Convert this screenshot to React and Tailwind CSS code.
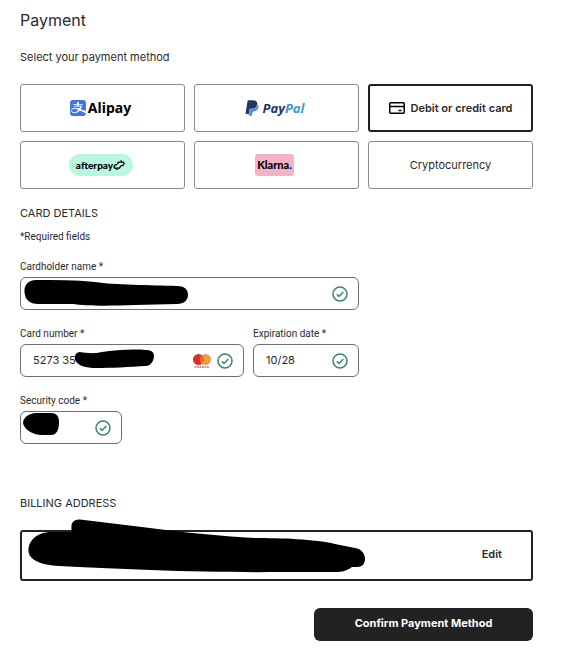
import { useState } from 'react';
import { SiAlipay } from 'react-icons/si';

const AlipayLogo = () => (
    <span className="mr-1 flex items-center gap-0.5 text-black">
        <SiAlipay className="h-4 w-4 text-[#3b76e8]" />
        <span className="font-['Noto_Sans',sans-serif] text-[14px] leading-4 font-bold">Alipay</span>
    </span>
);

const PayPalLogo = () => (
    <span className="mr-1 flex items-center gap-1 font-['Open_Sans',sans-serif] text-[13px] leading-4 font-bold italic">
        <svg viewBox="1 0 22 24" className="h-4 w-3.5" aria-hidden="true">
            <path
                fill="#4596cf"
                d="M21.222 6.917a3.35 3.35 0 0 0-.607-.541c-.013.076-.026.175-.041.254-.93 4.778-4.005 7.201-9.138 7.201h-2.19a.563.563 0 0 0-.556.479l-1.187 7.527h-.506l-.24 1.516a.56.56 0 0 0 .554.647h3.882c.46 0 .85-.334.922-.788.06-.26.76-4.852.816-5.09a.932.932 0 0 1 .923-.788h.58c3.76 0 6.705-1.528 7.565-5.946.36-1.847.174-3.388-.777-4.471z"
            />
            <path
                fill="#27346a"
                d="M7.076 21.337H2.47a.641.641 0 0 1-.633-.74L4.944.901C5.026.382 5.474 0 5.998 0h7.46c2.57 0 4.578.543 5.69 1.81 1.01 1.15 1.304 2.42 1.012 4.287-.023.143-.047.288-.077.437-.983 5.05-4.349 6.797-8.647 6.797h-2.19c-.524 0-.968.382-1.05.9l-1.12 7.106z"
            />
        </svg>
        <span className="text-[#27346a]">
            Pay<span className="text-[#4596cf]">Pal</span>
        </span>
    </span>
);

const AfterpayLogo = () => (
    <span className="mr-1 flex h-[22px] w-16 items-center justify-center rounded-full bg-[#b9f7df] font-[Lato,sans-serif] text-[10px] leading-4 font-black text-black">
        afterpay
        <svg
            viewBox="0 0 12 12"
            className="h-3 w-3"
            fill="none"
            stroke="currentColor"
            strokeWidth="1.3"
            strokeLinejoin="round"
            aria-hidden="true"
        >
            <path d="M4.300 5.200 5.500 3.200H10.300L11.200 4.300 9.700 6.700H7.800" />
            <path d="M7.700 6.700 6.500 9.200H1.700L0.900 8.100 2.300 5.600H4.200" />
            <path d="M7.600 1.500 9 3.200M4.400 10.900 3 9.200" />
        </svg>
    </span>
);

const KlarnaLogo = () => (
    <span className="mr-1 flex h-[22px] w-[39px] items-center justify-center rounded-[3px] bg-[#f5b2c6] font-[Lato,sans-serif] text-[11px] leading-4 font-black text-black">
        Klarna.
    </span>
);

const CardLabel = () => (
    <span className="flex items-center gap-1.5 font-semibold">
        <svg viewBox="0 0 16 12" className="h-3 w-4 text-black" fill="none" stroke="currentColor" strokeWidth="1.5" aria-hidden="true">
            <rect x="0.75" y="0.75" width="14.5" height="10.5" rx="1" />
            <path d="M1 4.500h14M9.500 8.500h3" />
        </svg>
        Debit or credit card
    </span>
);

const methods = [
    { id: 'alipay', content: <AlipayLogo /> },
    { id: 'paypal', content: <PayPalLogo /> },
    { id: 'card', content: <CardLabel /> },
    { id: 'afterpay', content: <AfterpayLogo /> },
    { id: 'klarna', content: <KlarnaLogo /> },
    { id: 'crypto', content: 'Cryptocurrency' },
];

const Check = () => (
    <svg viewBox="0 0 16 16" className="h-4 w-4" fill="none" stroke="#3d8270" strokeWidth="1.5" aria-hidden="true">
        <circle cx="8" cy="8" r="7" />
        <path d="m4.800 8.200 2.200 2.200 4.300-4.400" />
    </svg>
);

const Mastercard = () => (
    <svg viewBox="0 0 18 14" className="h-3.5 w-[18px]" aria-hidden="true">
        <circle cx="5.500" cy="5.500" r="5.500" fill="#d9302c" />
        <circle cx="12.500" cy="5.500" r="5.500" fill="#eb9f3e" />
        <path d="M9 1.250a5.500 5.500 0 0 1 0 8.500a5.500 5.500 0 0 1 0-8.500z" fill="#ee6630" />
        <path d="M1.500 13h15" stroke="#555" strokeWidth="1" strokeDasharray="2 0.500" />
    </svg>
);

const Field = ({ id, label, value, className, icon, children }) => (
    <div className={className}>
        <label htmlFor={id} className="mb-0.5 block font-[Roboto,sans-serif] text-[10px] leading-4">
            {label} *
        </label>
        <div className="relative">
            <input
                id={id}
                type="text"
                defaultValue={value}
                className="block h-[33px] w-full rounded-md border border-[#6e6e6e] bg-white pr-14 pb-0.5 pl-3 text-[11px] focus:outline-none"
            />
            {children}
            <span className="pointer-events-none absolute inset-y-0 right-[11px] flex items-center gap-1.5">
                {icon}
                <Check />
            </span>
        </div>
    </div>
);

const App = () => {
    const [selected, setSelected] = useState('card');

    return (
        <main className="bg-white pt-2 pr-[46px] pb-6 pl-5 font-[Inter,sans-serif] text-[11px] text-[#2a2a2a]">
            <h1 className="text-[16px] leading-6">Payment</h1>
            <p className="mt-4 leading-[18px]">Select your payment method</p>

            <div className="mt-[18px] grid grid-cols-3 gap-[9px]">
                {methods.map(({ id, content }) => (
                    <button
                        key={id}
                        type="button"
                        aria-pressed={selected === id}
                        onClick={() => setSelected(id)}
                        className={`flex h-12 items-center justify-center rounded-[3px] ${
                            selected === id ? 'border-2 border-[#222]' : 'border border-[#8a8a8a]'
                        }`}
                    >
                        {content}
                    </button>
                ))}
            </div>

            {/* Card details */}
            <h2 className="mt-4 leading-4">CARD DETAILS</h2>
            <p className="mt-2 font-[Roboto,sans-serif] text-[10px] leading-4">*Required fields</p>

            <div className="mt-[14px] grid grid-cols-3 gap-x-[9px]">
                <div className="col-span-2 flex flex-col gap-4">
                    <Field id="name" label="Cardholder name">
                        <svg viewBox="0 0 170 33" className="absolute top-0 left-0 h-[33px] w-[170px]" aria-hidden="true">
                            <path d="M16 3C8 3 4 8 4.500 15C5 23 10 27 18 27H54C64 29 90 29 115 28L157 27C164 27 168 23 168 18C168 12 164 9 157 9C130 8 95 8 75 5C55 3 35 3 16 3Z" />
                        </svg>
                    </Field>
                    <div className="flex gap-[9px]">
                        <Field id="number" label="Card number" value="5273 35" className="flex-1" icon={<Mastercard />}>
                            <svg viewBox="0 0 140 33" className="absolute top-0 left-0 h-[33px] w-[140px]" aria-hidden="true">
                                <path d="M60 8C56 8 54 12 55 16C58 22 66 24 76 24C90 24 110 23 126 22C131 22 134 16 134 12C134 8 131 6 126 6C112 5 95 6 82 8C73 10 67 9 60 8Z" />
                            </svg>
                        </Field>
                        <Field id="expiry" label="Expiration date" value="10/28" className="w-[106px]" />
                    </div>
                    <Field id="cvc" label="Security code" className="w-[102px]">
                        <svg viewBox="0 0 40 33" className="absolute top-0 left-0 h-[33px] w-10" aria-hidden="true">
                            <path d="M15 2C8 3 3 7 3 12C4 18 12 24 22 24H31C37 24 39 18 39 11C39 5 36 2 31 2Z" />
                        </svg>
                    </Field>
                </div>
            </div>

            {/* Billing address */}
            <h2 className="mt-[51px] leading-4">BILLING ADDRESS</h2>
            <div className="relative mt-[19px] flex h-[51px] items-center justify-end rounded-[3px] border-2 border-[#222] pr-[29px]">
                <svg viewBox="0 0 350 64" className="absolute -top-[14px] -left-0.5 h-16 w-[350px]" aria-hidden="true">
                    <path d="M31 14C17 14 8 23 8.500 33C9 42 21 47 39 48C95 51 190 55 260 54H318C324 54 329 51 332 49H337C342 49 345 46 345 41C345 35 341 31 335 30L315 26C295 21 260 20 235 20C200 18 160 14 130 10L60 1.500C54 1 51 5 51.500 9C51 12 52 14 54 14Z" />
                </svg>
                <button type="button" className="pb-1 leading-4 font-semibold">
                    Edit
                </button>
            </div>

            <div className="mt-[27px] flex justify-end">
                <button type="submit" className="h-[33px] w-[219px] rounded-md bg-[#222] pb-0.5 font-bold text-white">
                    Confirm Payment Method
                </button>
            </div>
        </main>
    );
};

export default App;
